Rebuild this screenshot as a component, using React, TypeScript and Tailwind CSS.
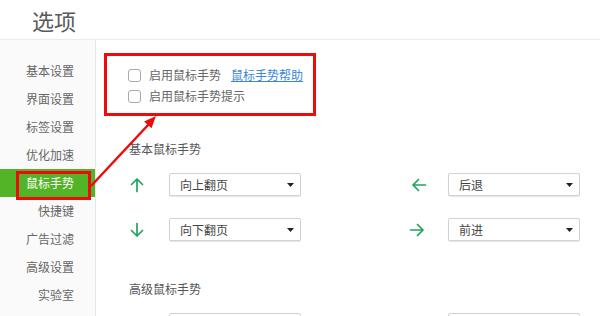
import React from "react";

const font = { fontFamily: '"Noto Sans CJK SC", "Noto Sans", sans-serif' };

function ArrowIcon({ dir }: { dir: "up" | "down" | "left" | "right" }) {
  const rot = { up: 0, right: 90, down: 180, left: 270 }[dir];
  return (
    <svg width="16" height="16" viewBox="0 0 16 16" style={{ transform: `rotate(${rot}deg)` }}>
      <path d="M8 14.5V2 M2.5 7.5 L8 2 L13.5 7.5" fill="none" stroke="#1ea45c" strokeWidth="1.7" strokeLinecap="round" strokeLinejoin="round" />
    </svg>
  );
}

function Select({ label }: { label: string }) {
  return (
    <div className="w-[132px] h-[23px] bg-white border border-[#d2d2d2] rounded-[2px] shadow-[0_1px_1px_rgba(0,0,0,0.1)] flex items-center justify-between pl-[10px] pr-[6px]">
      <span className="text-[12px] leading-[14px] text-[#444]">{label}</span>
      <svg width="7" height="4" viewBox="0 0 7 4">
        <path d="M0 0 H7 L3.5 4 Z" fill="#222" />
      </svg>
    </div>
  );
}

function Checkbox() {
  return <div className="w-[13px] h-[13px] rounded-[3px] border border-[#a9a9a9] bg-white shrink-0" />;
}

export default function App() {
  const items = ["基本设置", "界面设置", "标签设置", "优化加速", "鼠标手势", "快捷键", "广告过滤", "高级设置", "实验室"];
  return (
    <div className="w-[600px] h-[316px] overflow-hidden relative bg-white" style={font}>
      <div className="h-[40px] border-b border-[#ebebeb] flex items-center pl-[32px]">
        <span className="text-[22px] leading-[26px] text-[#5a5a5a]">选项</span>
      </div>
      <div className="flex h-[276px]">
        <div className="w-[96px] shrink-0 bg-[#fafafa] border-r border-[#e6e6e6] pt-[17px]">
          {items.map((it, i) =>
            i === 4 ? (
              <div key={it} className="relative h-[28px] bg-[#52b426] flex items-center justify-end pr-[21px]">
                <span className="text-[12px] leading-[14px] text-white">{it}</span>
                <div className="absolute left-[16px] top-[2px] w-[75px] h-[29px] border-[3px] border-[#ec0c0c]" />
              </div>
            ) : (
              <div key={it} className="h-[28px] flex items-center justify-end pr-[21px]">
                <span className="text-[12px] leading-[14px] text-[#666]">{it}</span>
              </div>
            )
          )}
        </div>
        <div className="flex-1">
          <div className="mt-[13px] ml-[8px] w-[212px] h-[63px] border-[3px] border-[#ec0c0c] pl-[21px] pt-[12px] flex flex-col gap-[7px]">
            <div className="flex items-center h-[14px]">
              <Checkbox />
              <span className="ml-[8px] text-[12px] leading-[14px] text-[#666]">启用鼠标手势</span>
              <span className="ml-[10px] text-[12px] leading-[14px] text-[#3b86d8] underline">鼠标手势帮助</span>
            </div>
            <div className="flex items-center h-[14px]">
              <Checkbox />
              <span className="ml-[8px] text-[12px] leading-[14px] text-[#666]">启用鼠标手势提示</span>
            </div>
          </div>
          <div className="pl-[33px]">
            <div className="mt-[26px] text-[12px] leading-[14px] text-[#555]">基本鼠标手势</div>
            <div className="mt-[17px] grid grid-cols-[40px_132px_107px_40px_132px] items-center">
              <div><ArrowIcon dir="up" /></div>
              <Select label="向上翻页" />
              <div />
              <div className="pl-[3px]"><ArrowIcon dir="left" /></div>
              <Select label="后退" />
            </div>
            <div className="mt-[22px] grid grid-cols-[40px_132px_107px_40px_132px] items-center">
              <div><ArrowIcon dir="down" /></div>
              <Select label="向下翻页" />
              <div />
              <div className="pl-[1px]"><ArrowIcon dir="right" /></div>
              <Select label="前进" />
            </div>
            <div className="mt-[41px] text-[12px] leading-[14px] text-[#555]">高级鼠标手势</div>
            <div className="mt-[17px] grid grid-cols-[40px_132px_107px_40px_132px] items-center">
              <div />
              <Select label="" />
              <div />
              <div />
              <Select label="" />
            </div>
          </div>
        </div>
      </div>
      <svg className="absolute inset-0 pointer-events-none" width="600" height="316">
        <line x1="91" y1="186" x2="149" y2="124" stroke="#ec0c0c" strokeWidth="2.5" />
        <polygon points="156,116 151.5,128.2 144.1,121.4" fill="#ec0c0c" />
      </svg>
    </div>
  );
}
